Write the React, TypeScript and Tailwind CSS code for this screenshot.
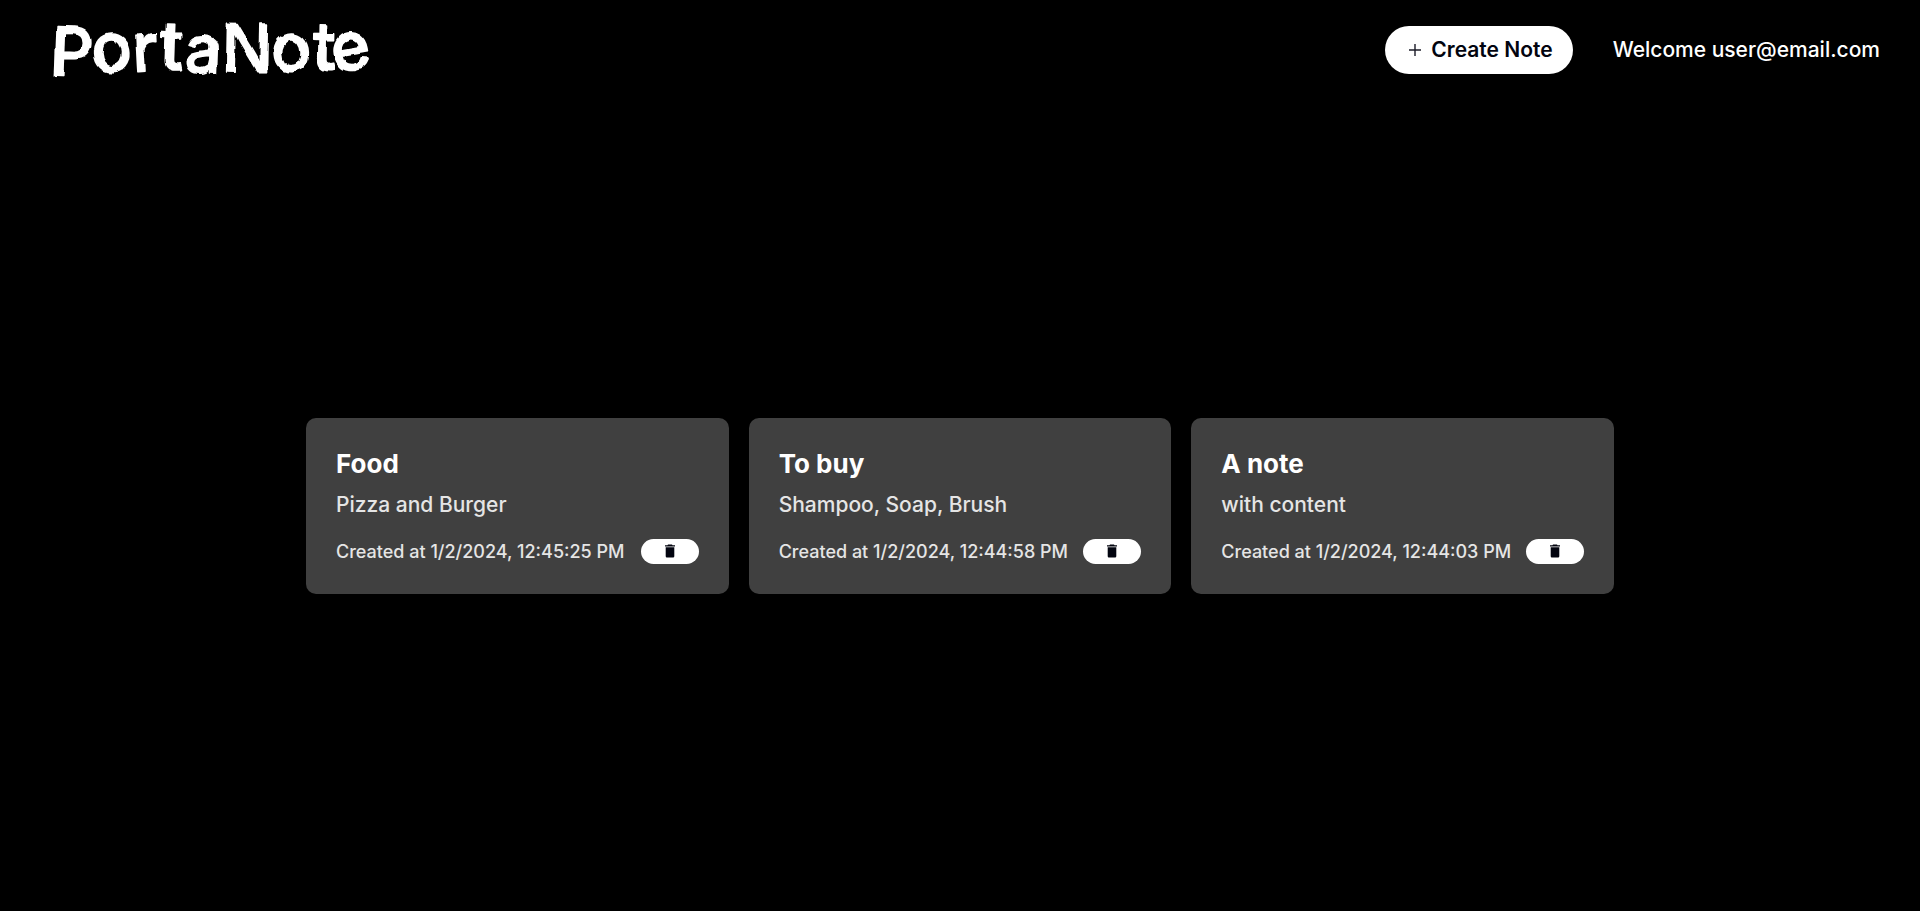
type Note = { title: string; content: string; createdAt: string };

const notes: Note[] = [
  { title: "Food", content: "Pizza and Burger", createdAt: "1/2/2024, 12:45:25 PM" },
  { title: "To buy", content: "Shampoo, Soap, Brush", createdAt: "1/2/2024, 12:44:58 PM" },
  { title: "A note", content: "with content", createdAt: "1/2/2024, 12:44:03 PM" },
];

function PlusIcon() {
  return (
    <svg className="size-3" viewBox="0 0 12 12" fill="none" stroke="#1c1c28" strokeWidth="1.4" aria-hidden="true">
      <path d="M6 0v12M0 6h12" />
    </svg>
  );
}

function TrashIcon() {
  return (
    <svg className="h-3.5 w-3" viewBox="0 0 12 14" fill="currentColor" aria-hidden="true">
      <path d="M4 .5h4l.5.7H11v1.3H1V1.2h2.5z" />
      <path d="M1.7 3.2h8.6v9.1a1.2 1.2 0 0 1-1.2 1.2H2.9a1.2 1.2 0 0 1-1.2-1.2z" />
    </svg>
  );
}

/* Wordmark with uneven baselines and a rough brush edge. */
function Logo() {
  return (
    <a href="#" className="block">
      <svg className="h-[100px] w-[340px] overflow-visible" viewBox="0 0 340 100" role="img" aria-label="PortaNote">
        <defs>
          <filter id="brush" x="-5%" y="-20%" width="110%" height="140%">
            <feTurbulence type="fractalNoise" baseFrequency="0.09 0.03" numOctaves="2" seed="7" result="grain" />
            <feDisplacementMap in="SourceGraphic" in2="grain" scale="6" xChannelSelector="R" yChannelSelector="G" />
          </filter>
        </defs>
        <text
          x="2"
          y="75"
          dy="0 -3 0 -3 3 0 0 -2 3"
          rotate="2 -3 -3 2 2 1 -3 1 -10"
          fill="white"
          stroke="white"
          strokeWidth="1.5"
          strokeLinejoin="round"
          filter="url(#brush)"
          className="font-['Inter',sans-serif] text-[67px] font-medium"
        >
          PortaNote
        </text>
      </svg>
    </a>
  );
}

function Header() {
  return (
    <header className="flex h-[100px] items-center justify-between pr-10 pl-12">
      <Logo />
      <div className="flex items-center gap-10">
        <button
          type="button"
          className="flex h-12 items-center gap-2.5 rounded-full bg-white pr-5 pl-6 text-[21px] font-semibold text-[#02040f]"
        >
          <PlusIcon />
          Create Note
        </button>
        <p className="text-[21px] font-medium">Welcome user@email.com</p>
      </div>
    </header>
  );
}

function NoteCard({ note }: { note: Note }) {
  return (
    <article className="rounded-[10px] bg-[#404040] p-[30px]">
      <h2 className="text-[26px] leading-8 font-bold">{note.title}</h2>
      <p className="mt-2.5 text-[21px] leading-[29px] font-medium text-[#e5e5e5]">{note.content}</p>
      <div className="mt-5 flex items-center justify-between">
        <p className="text-lg leading-[25px] font-medium text-[#e5e5e5]">Created at {note.createdAt}</p>
        <button
          type="button"
          aria-label={`Delete ${note.title}`}
          className="flex h-[25px] w-[58px] items-center justify-center rounded-full bg-white text-[#02040f]"
        >
          <TrashIcon />
        </button>
      </div>
    </article>
  );
}

export default function App() {
  return (
    <div className="flex min-h-screen flex-col bg-black font-['Inter',sans-serif] text-white">
      <Header />
      <main className="flex flex-1 items-center justify-center">
        <div className="grid w-full max-w-[1308px] grid-cols-3 gap-5">
          {notes.map((note) => (
            <NoteCard key={note.title} note={note} />
          ))}
        </div>
      </main>
    </div>
  );
}
